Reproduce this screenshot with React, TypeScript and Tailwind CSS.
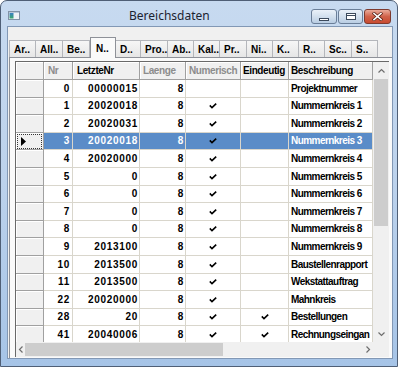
import React from "react";

const COLS = "grid grid-cols-[28px_29px_67px_46px_55px_48px_84px]";

type Row = { nr: number; letzte: string; num: boolean; ein: boolean; desc: string };

const rows: Row[] = [
  { nr: 0, letzte: "00000015", num: false, ein: false, desc: "Projektnummer" },
  { nr: 1, letzte: "20020018", num: true, ein: false, desc: "Nummernkreis 1" },
  { nr: 2, letzte: "20020031", num: true, ein: false, desc: "Nummernkreis 2" },
  { nr: 3, letzte: "20020018", num: true, ein: false, desc: "Nummernkreis 3" },
  { nr: 4, letzte: "20020000", num: true, ein: false, desc: "Nummernkreis 4" },
  { nr: 5, letzte: "0", num: true, ein: false, desc: "Nummernkreis 5" },
  { nr: 6, letzte: "0", num: true, ein: false, desc: "Nummernkreis 6" },
  { nr: 7, letzte: "0", num: true, ein: false, desc: "Nummernkreis 7" },
  { nr: 8, letzte: "0", num: true, ein: false, desc: "Nummernkreis 8" },
  { nr: 9, letzte: "2013100", num: true, ein: false, desc: "Nummernkreis 9" },
  { nr: 10, letzte: "2013500", num: true, ein: false, desc: "Baustellenrapport" },
  { nr: 11, letzte: "2013500", num: true, ein: false, desc: "Wekstattauftrag" },
  { nr: 22, letzte: "20020000", num: true, ein: false, desc: "Mahnkreis" },
  { nr: 28, letzte: "20", num: true, ein: true, desc: "Bestellungen" },
  { nr: 41, letzte: "20040006", num: true, ein: true, desc: "Rechnungseingan" },
];

const HEIGHTS = ["h-[18px]", "h-[17px]", "h-[18px]", "h-[17px]", "h-[18px]"];

const tabs: { label: string; w: string; sel?: boolean }[] = [
  { label: "Ar..", w: "w-[27px]" },
  { label: "All..", w: "w-[27px]" },
  { label: "Be..", w: "w-[27px]" },
  { label: "N..", w: "w-[26px]", sel: true },
  { label: "D..", w: "w-[25px]" },
  { label: "Pro..", w: "w-[27px]" },
  { label: "Ab..", w: "w-[26px]" },
  { label: "Kal..", w: "w-[26px]" },
  { label: "Pr..", w: "w-[27px]" },
  { label: "Ni..", w: "w-[26px]" },
  { label: "K..", w: "w-[26px]" },
  { label: "R..", w: "w-[26px]" },
  { label: "Sc..", w: "w-[27px]" },
  { label: "S..", w: "w-[26px]" },
];

function Check() {
  return (
    <svg width="8" height="6" viewBox="0 0 8 6">
      <path d="M0.8 2.4 L3 4.7 L7.2 0.7" fill="none" stroke="#000" strokeWidth="1.6" />
    </svg>
  );
}

function AppIcon() {
  return (
    <svg width="12" height="9" viewBox="0 0 12 9">
      <defs>
        <linearGradient id="ig" x1="0" y1="0" x2="0" y2="1">
          <stop offset="0" stopColor="#3a7fc4" />
          <stop offset="1" stopColor="#3aa86a" />
        </linearGradient>
      </defs>
      <rect x="0.5" y="0.5" width="11" height="8" fill="#eef2f6" stroke="#8192a6" />
      <rect x="1.5" y="2" width="4" height="5.5" fill="url(#ig)" />
      <rect x="1" y="1" width="10" height="1" fill="#b8c7d8" />
    </svg>
  );
}

function Chevron({ dir }: { dir: "up" | "down" | "left" | "right" }) {
  const d =
    dir === "up"
      ? "M0.5 4.5 L3.5 1.5 L6.5 4.5"
      : dir === "down"
      ? "M0.5 1.5 L3.5 4.5 L6.5 1.5"
      : dir === "left"
      ? "M4.5 0.5 L1.5 3.5 L4.5 6.5"
      : "M1.5 0.5 L4.5 3.5 L1.5 6.5";
  const w = dir === "up" || dir === "down" ? 7 : 6;
  const h = dir === "up" || dir === "down" ? 6 : 7;
  return (
    <svg width={w} height={h} viewBox={`0 0 ${w} ${h}`}>
      <path d={d} fill="none" stroke="#6e6e6e" strokeWidth="1.2" />
    </svg>
  );
}

const cellBase = "border-r border-b border-[#d9d6cc] overflow-hidden whitespace-nowrap flex items-center";
const numText = "font-bold text-[10px] leading-none tracking-[0.7px]";
const txt = "font-bold text-[10px] leading-none tracking-[-0.55px]";
const hdr = "bg-[#f0f0f0] border-r border-b border-[#a0a0a0] shadow-[inset_1px_1px_0_#ffffff] flex items-center overflow-hidden whitespace-nowrap font-bold text-[10px] leading-none tracking-[-0.4px]";

export default function App() {
  return (
    <div className="w-[398px] h-[367px] overflow-hidden rounded-t-[7px] border border-[#4f5f76] bg-gradient-to-b from-[#c7daf0] via-[#bcd2ec] to-[#a6c4e7] flex flex-col font-['Liberation_Sans',Arial,sans-serif] text-black">
      {/* title bar */}
      <div className="h-[25px] shrink-0 flex items-start pl-[7px] pr-[6px]">
        <div className="mt-[10px] flex">
          <AppIcon />
        </div>
        <div className="ml-[109px] mt-[6px] text-[12px] leading-[18px] font-['Noto_Sans',sans-serif] text-[#1c2330]">
          Bereichsdaten
        </div>
        <div className="ml-auto mt-[8px] flex gap-[1px]">
          <div className="w-[26px] h-[15px] rounded-[3px] border border-[#6a7e98] bg-gradient-to-b from-[#eaf1f9] via-[#d3e0ee] to-[#b9cde3] flex items-end justify-center pb-[2px]">
            <div className="w-[10px] h-[3px] bg-white border border-[#3c4a5c]" />
          </div>
          <div className="w-[25px] h-[15px] rounded-[3px] border border-[#6a7e98] bg-gradient-to-b from-[#eaf1f9] via-[#d3e0ee] to-[#b9cde3] flex items-center justify-center">
            <div className="w-[10px] h-[7px] border border-[#3c4a5c] bg-white flex items-start justify-center">
              <div className="w-[8px] h-[1px] mt-[1px] bg-[#3c4a5c]" />
            </div>
          </div>
          <div className="w-[27px] h-[15px] rounded-[3px] border border-[#7e3a2e] bg-gradient-to-b from-[#e9ab9b] via-[#d0624a] to-[#c84a30] flex items-center justify-center">
            <svg width="11" height="9" viewBox="0 0 11 9">
              <path d="M2 1.5 L9 7.5 M9 1.5 L2 7.5" stroke="#5a2418" strokeWidth="3" strokeLinecap="square" />
              <path d="M2 1.5 L9 7.5 M9 1.5 L2 7.5" stroke="#ffffff" strokeWidth="1.6" strokeLinecap="square" />
            </svg>
          </div>
        </div>
      </div>

      {/* client area */}
      <div className="flex-1 ml-[6px] mr-[4px] mb-[7px] border border-[#8298b5] bg-[#f0f0f0] overflow-hidden flex flex-col">
        {/* tabs */}
        <div className="pt-[10px] pl-[1px] flex items-end h-[30px] shrink-0">
          {tabs.map((t, i) =>
            t.sel ? (
              <div
                key={i}
                className={`${t.w} h-[21px] -mb-[1px] relative z-10 bg-[#fafafa] border-t border-r border-l border-[#8e9198] pl-[5px] pt-[6px] text-[10px] leading-none font-bold whitespace-nowrap overflow-hidden`}
              >
                {t.label}
              </div>
            ) : (
              <div
                key={i}
                className={`${t.w} h-[17px] bg-gradient-to-b from-[#f6f6f6] to-[#e6e6e6] border-t border-r border-[#b4b6bb] ${i === 0 ? "border-l" : ""} pl-[4px] pt-[4px] text-[10px] leading-none font-bold whitespace-nowrap overflow-hidden`}
              >
                {t.label}
              </div>
            )
          )}
        </div>

        {/* tab panel */}
        <div className="flex-1 ml-[1px] border-l border-t border-[#8e9198] bg-[#fafafa] pl-[5px] pt-[3px] overflow-hidden">
          <div className="border-l border-t border-[#696969] w-[374px] flex flex-col">
            <div className="flex">
              {/* table */}
              <div className="w-[357px] h-[280px] overflow-hidden bg-white">
                {/* header */}
                <div className={`${COLS} h-[18px]`}>
                  <div className={hdr} />
                  <div className={`${hdr} pl-[4px] text-[#8c8c8c]`}>Nr</div>
                  <div className={`${hdr} pl-[4px]`}>LetzteNr</div>
                  <div className={`${hdr} pl-[3px] text-[#8c8c8c]`}>Laenge</div>
                  <div className={`${hdr} pl-[3px] text-[#8c8c8c]`}>Numerisch</div>
                  <div className={`${hdr} pl-[2px]`}>Eindeutig</div>
                  <div className={`${hdr} pl-[2px]`}>Beschreibung</div>
                </div>
                {rows.map((r, i) => {
                  const sel = r.nr === 3;
                  const bg = sel ? "bg-[#5a8cc8] text-white" : "bg-white";
                  return (
                    <div key={i} className={`${COLS} ${HEIGHTS[i % 5]}`}>
                      <div className="bg-[#f0f0f0] border-r border-b border-[#a0a0a0] shadow-[inset_1px_1px_0_#ffffff] flex items-center">
                        {sel && (
                          <div className="ml-[1px] w-[25px] h-[15px] border border-dotted border-[#333] flex items-center pl-[3px]">
                            <svg width="5" height="9" viewBox="0 0 5 9">
                              <path d="M0 0 L5 4.5 L0 9 Z" fill="#000" />
                            </svg>
                          </div>
                        )}
                      </div>
                      <div className={`${cellBase} ${bg} justify-end pr-[2px] ${numText}`}>{r.nr}</div>
                      <div className={`${cellBase} ${bg} justify-end pr-[1px] ${numText}`}>{r.letzte}</div>
                      <div className={`${cellBase} ${bg} justify-end pr-[1px] ${numText}`}>8</div>
                      <div className={`${cellBase} ${bg} justify-center`}>{r.num && <Check />}</div>
                      <div className={`${cellBase} ${bg} justify-center`}>{r.ein && <Check />}</div>
                      <div className={`${cellBase} ${bg} pl-[2px] ${txt}`}>{r.desc}</div>
                    </div>
                  );
                })}
              </div>
              {/* vertical scrollbar */}
              <div className="w-[16px] h-[280px] bg-[#f0f0f0] flex flex-col">
                <div className="h-[17px] flex items-center justify-center">
                  <Chevron dir="up" />
                </div>
                <div className="h-[147px] mx-[1px] bg-[#cdcdcd]" />
                <div className="flex-1" />
                <div className="h-[17px] flex items-center justify-center">
                  <Chevron dir="down" />
                </div>
              </div>
            </div>
            {/* horizontal scrollbar */}
            <div className="flex h-[15px]">
              <div className="w-[357px] bg-[#f0f0f0] flex items-center">
                <div className="w-[9px] flex justify-center">
                  <Chevron dir="left" />
                </div>
                <div className="w-[198px] h-[13px] bg-[#cdcdcd]" />
                <div className="flex-1" />
                <div className="w-[11px] flex justify-center">
                  <Chevron dir="right" />
                </div>
              </div>
              <div className="w-[16px] bg-[#f0f0f0]" />
            </div>
          </div>
        </div>
      </div>
    </div>
  );
}
